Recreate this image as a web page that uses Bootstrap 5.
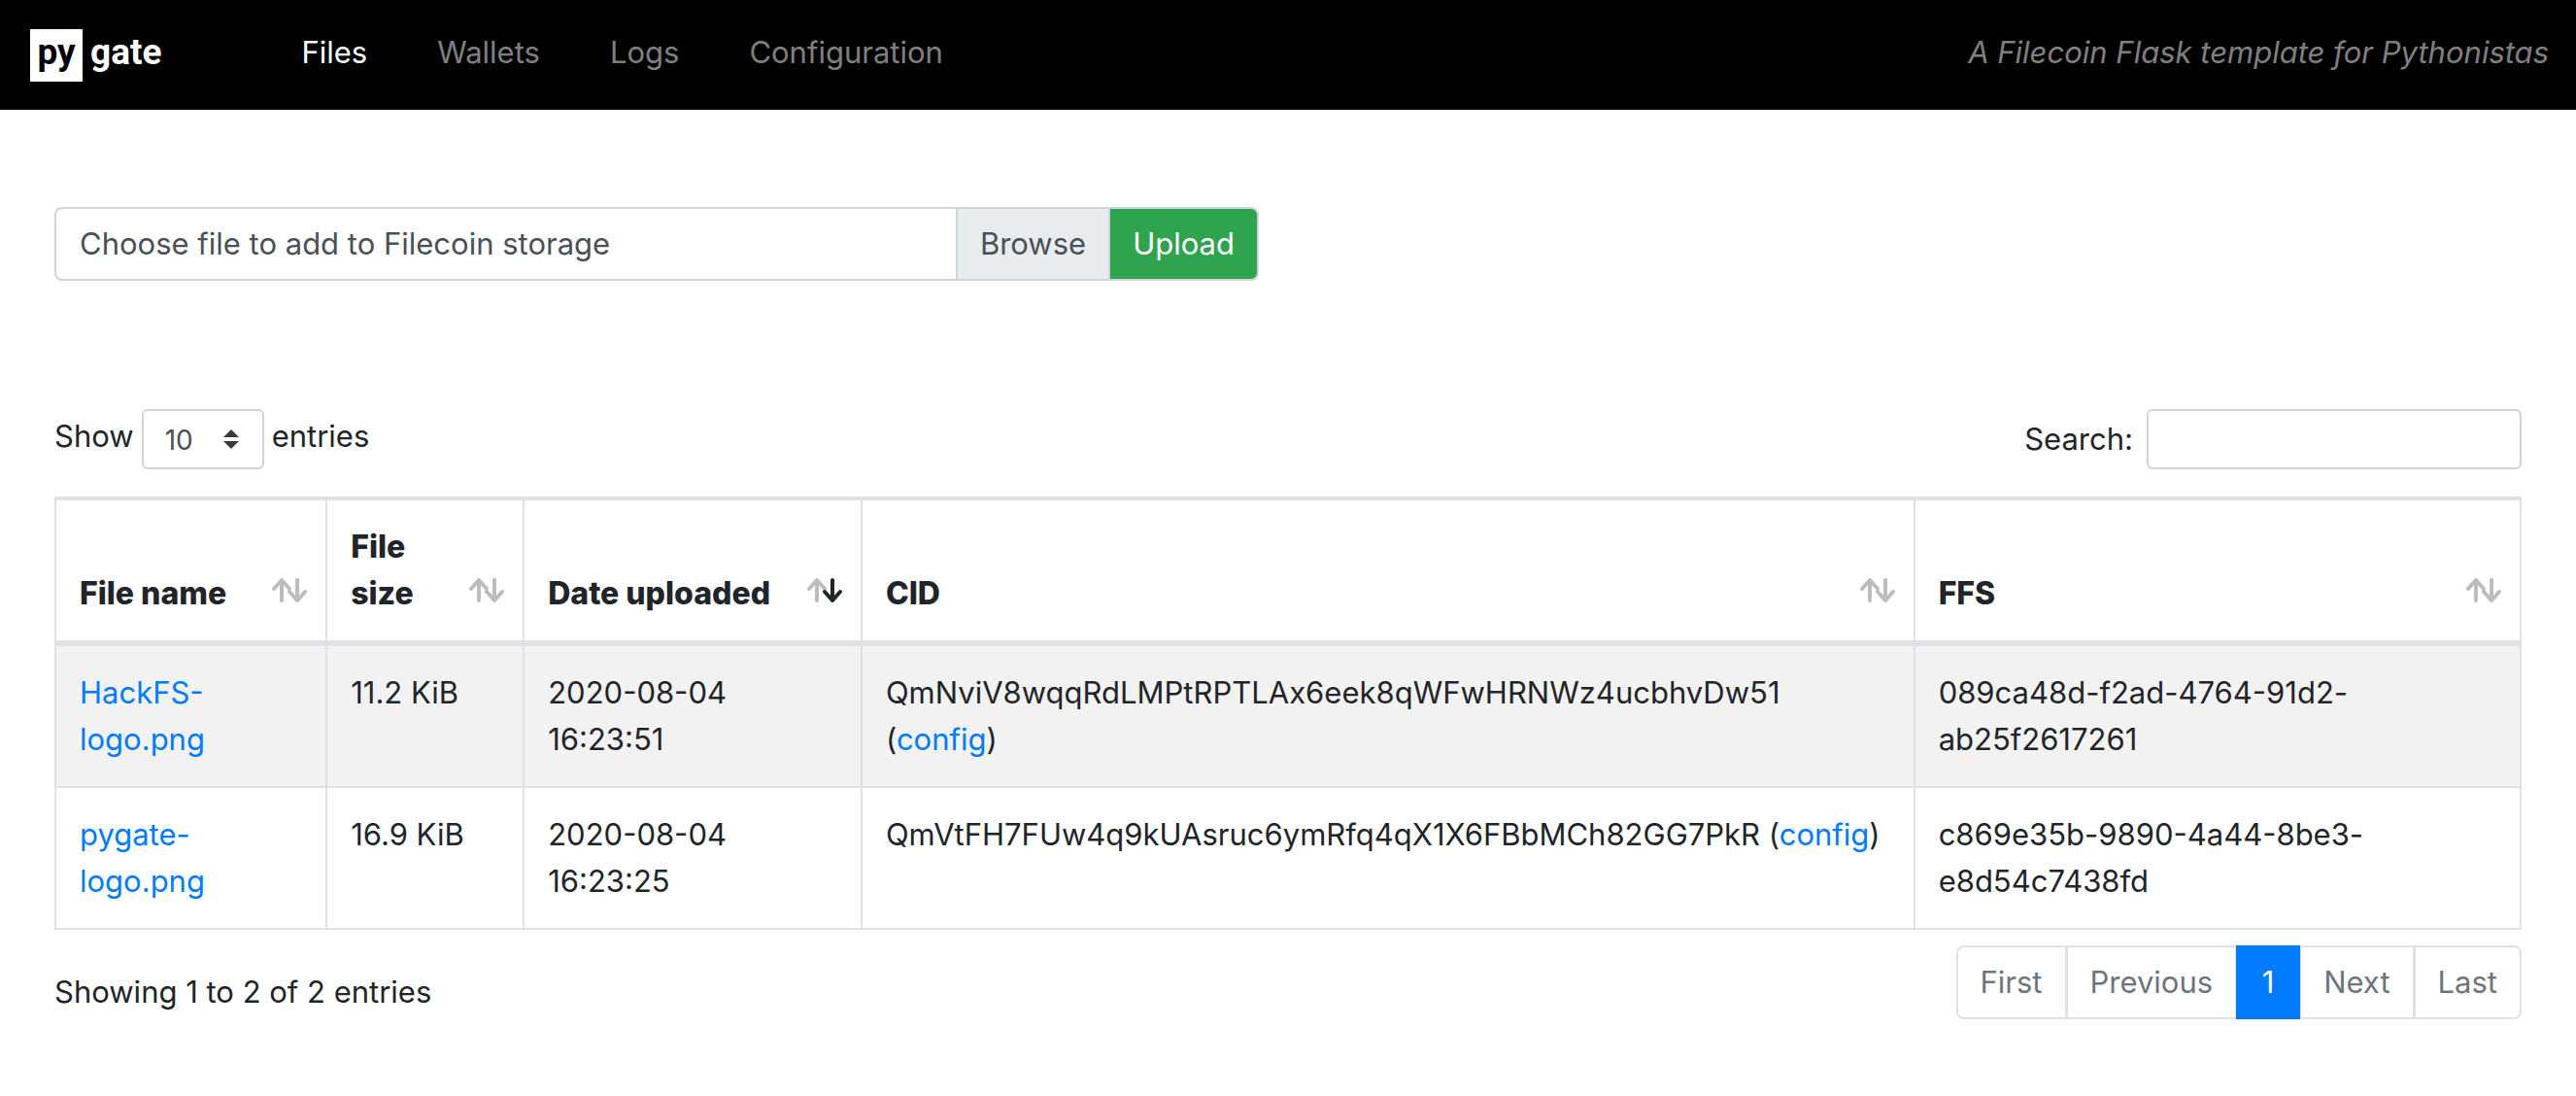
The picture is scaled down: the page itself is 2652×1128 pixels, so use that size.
<!DOCTYPE html>
<html lang="en">
<head>
<meta charset="utf-8">
<meta name="viewport" content="width=device-width, initial-scale=1">
<title>Pygate - Files</title>
<link href="https://cdn.jsdelivr.net/npm/bootstrap@5.3.0/dist/css/bootstrap.min.css" rel="stylesheet">
<style>
  body { font-family: Inter, "Liberation Sans", sans-serif; font-size: 31px; line-height: 48px; color: #212529; background: #fff; }
  a { color: #007bff; text-decoration: none; }
  .topbar { background: #000; padding: 14px 28px 19px 31px; }
  .brand-logo { font: 700 37px/48px Roboto, sans-serif; color: #fff; margin: 16px 108px 0 0; }
  .brand-box { background: #fff; color: #000; width: 54px; height: 54px; text-align: center; margin-right: 8px; }
  .topbar .nav-link { color: rgba(255,255,255,.5); padding: 16px 36px; }
  .topbar .nav-link.active { color: #fff; }
  .tagline { color: rgba(255,255,255,.5); font-style: italic; padding: 16px 0; }
  .page-body { padding: 100px 56px 72px; }
  .upload-group { width: 1240px; max-width: 100%; height: 76px; border: 2px solid #ced4da; border-radius: 8px; overflow: hidden; color: #495057; margin-bottom: 132px; }
  .upload-group .file-label { padding: 0 24px; cursor: pointer; }
  .upload-group .file-browse { background: #e9ecef; border-left: 2px solid #ced4da; border-right: 2px solid #ced4da; }
  .upload-group .file-browse, .upload-btn { padding: 0 23px; }
  .upload-btn { background: #2fa44f; color: #fff; border: 0; font-size: 31px; line-height: 48px; }
  .tool-row { margin-bottom: 28px; }
  .length-label { line-height: 56px; }
  .length-select, .search-box { height: 62px; border: 2px solid #ced4da; border-radius: 6px; font-size: 28px; line-height: 42px; color: #495057; background-color: #fff; }
  .select-wrap { width: 126px; }
  .length-select { appearance: none; width: 100%; padding: 2px 22px 0; }
  .select-caret { right: 26px; top: 21px; pointer-events: none; }
  .search-box { width: 386px; padding: 0 16px; }
  .search-group { gap: 14px; }
  .files-table { width: 100%; table-layout: fixed; border-collapse: separate; border-spacing: 0; border-top: 4px solid #dee2e6; border-left: 2px solid #dee2e6; }
  .files-table th, .files-table td { padding: 24px; border-right: 2px solid #dee2e6; border-bottom: 2px solid #dee2e6; vertical-align: top; }
  .files-table th { vertical-align: bottom; font-size: 32px; font-weight: 800; border-bottom-width: 6px; padding-right: 18px; }
  .files-table tbody tr:nth-child(odd) { background: #f2f2f2; }
  .files-table a { color: #007bff; }
  .col-name { width: 11%; } .col-bytes { width: 8%; } .col-date { width: 13.7%; } .col-cid { width: 42.7%; } .col-ffs { width: 24.6%; }
  .sort-icon { flex: none; width: 38px; height: 28px; margin-bottom: 14px; fill: none; stroke: #bcbdbf; stroke-width: 4; stroke-linecap: round; stroke-linejoin: round; }
  .sort-icon .on { stroke: #212529; }
  .foot-row { padding-top: 16px; }
  .foot-info { padding-top: 24px; }
  .pager .page-link { font-size: 31px; line-height: 48px; padding: 12px 23px; border: 2px solid #dee2e6; color: #6c757d; margin-left: -2px; background: #fff; }
  .pager .page-item:first-child .page-link { border-radius: 8px 0 0 8px; margin-left: 0; }
  .pager .page-item:last-child .page-link { border-radius: 0 8px 8px 0; }
  .pager .page-item.active .page-link { background: #007bff; border-color: #007bff; color: #fff; min-width: 66px; text-align: center; }
</style>
<script src="https://cdn.jsdelivr.net/npm/bootstrap@5.3.0/dist/js/bootstrap.bundle.min.js"></script>
</head>
<body>
<svg class="d-none">
  <symbol id="arrow-up" viewBox="0 0 38 28"><path d="M11 25V4M3 13L11 4L19 13"/></symbol>
  <symbol id="arrow-down" viewBox="0 0 38 28"><path d="M27 4V25M19 16L27 25L35 16"/></symbol>
</svg>
<nav class="topbar d-flex align-items-start">
  <a class="brand-logo d-flex" href="#"><span class="brand-box">py</span><span>gate</span></a>
  <ul class="nav flex-nowrap me-auto">
    <li class="nav-item"><a class="nav-link active" href="#">Files</a></li>
    <li class="nav-item"><a class="nav-link" href="#">Wallets</a></li>
    <li class="nav-item"><a class="nav-link" href="#">Logs</a></li>
    <li class="nav-item"><a class="nav-link" href="#">Configuration</a></li>
  </ul>
  <span class="tagline">A Filecoin Flask template for Pythonistas</span>
</nav>
<main class="page-body">
  <form class="upload-group d-flex align-items-stretch">
    <input class="visually-hidden" type="file" id="file">
    <label class="file-label flex-grow-1 d-flex align-items-center" for="file">Choose file to add to Filecoin storage</label>
    <label class="file-label file-browse d-flex align-items-center" for="file">Browse</label>
    <button class="upload-btn" type="button">Upload</button>
  </form>
  <div class="tool-row d-flex justify-content-between">
    <div class="d-flex gap-2">
      <label class="length-label" for="len">Show</label>
      <div class="select-wrap position-relative">
        <select class="length-select" id="len"><option>10</option><option>25</option><option>50</option><option>100</option></select>
        <svg class="select-caret position-absolute" width="16" height="20" viewBox="0 0 4 5"><path fill="#343a40" d="M2 0L0 2h4zm0 5L0 3h4z"/></svg>
      </div>
      <span class="length-label">entries</span>
    </div>
    <div class="search-group d-flex align-items-center">
      <label for="search">Search:</label>
      <input class="search-box" type="search" id="search">
    </div>
  </div>
  <table class="files-table">
    <colgroup><col class="col-name"><col class="col-bytes"><col class="col-date"><col class="col-cid"><col class="col-ffs"></colgroup>
    <thead>
      <tr>
        <th><div class="d-flex justify-content-between align-items-end gap-2">File name <svg class="sort-icon"><use href="#arrow-up"/><use href="#arrow-down"/></svg></div></th>
        <th><div class="d-flex justify-content-between align-items-end gap-2">File size <svg class="sort-icon"><use href="#arrow-up"/><use href="#arrow-down"/></svg></div></th>
        <th><div class="d-flex justify-content-between align-items-end gap-2">Date uploaded <svg class="sort-icon"><use href="#arrow-up"/><use class="on" href="#arrow-down"/></svg></div></th>
        <th><div class="d-flex justify-content-between align-items-end gap-2">CID <svg class="sort-icon"><use href="#arrow-up"/><use href="#arrow-down"/></svg></div></th>
        <th><div class="d-flex justify-content-between align-items-end gap-2">FFS <svg class="sort-icon"><use href="#arrow-up"/><use href="#arrow-down"/></svg></div></th>
      </tr>
    </thead>
    <tbody>
      <tr>
        <td><a href="#">HackFS-<wbr>logo.png</a></td>
        <td>11.2 KiB</td>
        <td>2020-08-04<br>16:23:51</td>
        <td>QmNviV8wqqRdLMPtRPTLAx6eek8qWFwHRNWz4ucbhvDw51 (<a href="#">config</a>)</td>
        <td>089ca48d-f2ad-4764-91d2-ab25f2617261</td>
      </tr>
      <tr>
        <td><a href="#">pygate-<wbr>logo.png</a></td>
        <td>16.9 KiB</td>
        <td>2020-08-04<br>16:23:25</td>
        <td>QmVtFH7FUw4q9kUAsruc6ymRfq4qX1X6FBbMCh82GG7PkR (<a href="#">config</a>)</td>
        <td>c869e35b-9890-4a44-8be3-e8d54c7438fd</td>
      </tr>
    </tbody>
  </table>
  <div class="foot-row d-flex justify-content-between">
    <div class="foot-info">Showing 1 to 2 of 2 entries</div>
    <ul class="pagination pager mb-0">
      <li class="page-item disabled"><a class="page-link" href="#">First</a></li>
      <li class="page-item disabled"><a class="page-link" href="#">Previous</a></li>
      <li class="page-item active"><a class="page-link" href="#">1</a></li>
      <li class="page-item disabled"><a class="page-link" href="#">Next</a></li>
      <li class="page-item disabled"><a class="page-link" href="#">Last</a></li>
    </ul>
  </div>
</main>
</body>
</html>
